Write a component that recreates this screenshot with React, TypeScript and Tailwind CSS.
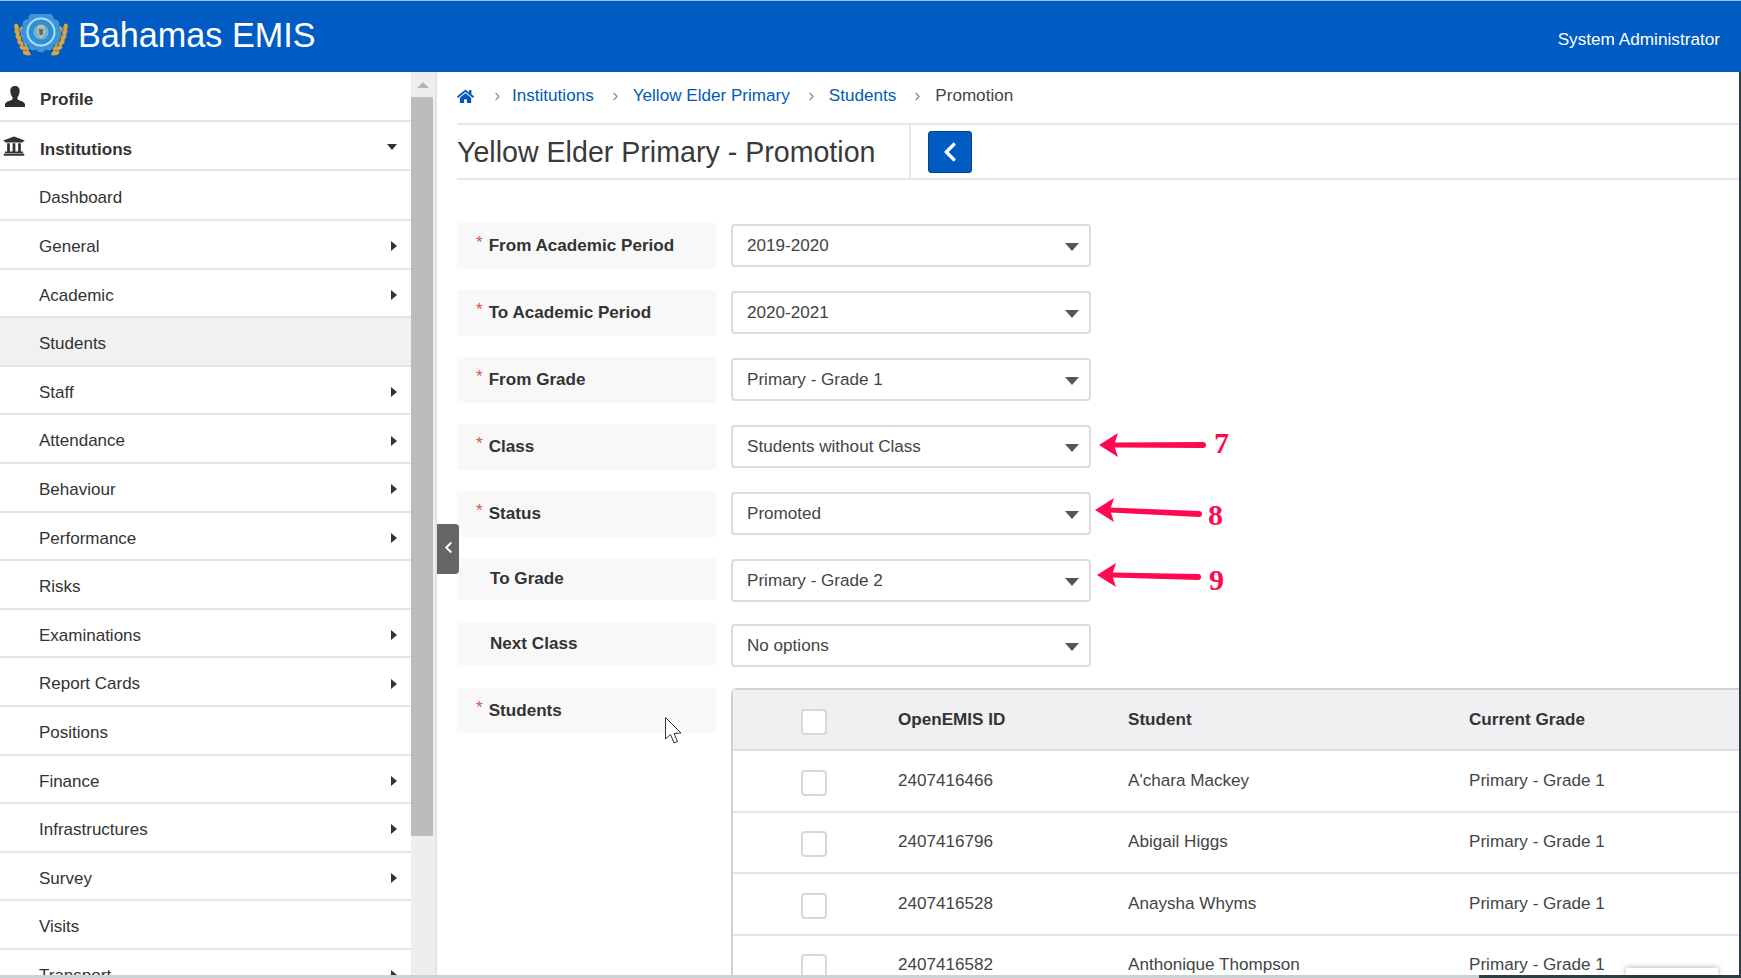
import React from 'react';
import { FaHome, FaUniversity, FaChevronLeft } from 'react-icons/fa';
import { ChevronRight } from 'lucide-react';

const navItems: [string, boolean][] = [
  ['Dashboard', false], ['General', true], ['Academic', true], ['Students', false], ['Staff', true],
  ['Attendance', true], ['Behaviour', true], ['Performance', true], ['Risks', false], ['Examinations', true],
  ['Report Cards', true], ['Positions', false], ['Finance', true], ['Infrastructures', true], ['Survey', true],
  ['Visits', false], ['Transport', true],
];

const formRows = [
  { label: 'From Academic Period', value: '2019-2020', req: true, top: 'mt-0', lh: 'h-[46px]' },
  { label: 'To Academic Period', value: '2020-2021', req: true, top: 'mt-[21px]', lh: 'h-[46px]' },
  { label: 'From Grade', value: 'Primary - Grade 1', req: true, top: 'mt-[21px]', lh: 'h-[46px]' },
  { label: 'Class', value: 'Students without Class', req: true, top: 'mt-[21px]', lh: 'h-[46px]' },
  { label: 'Status', value: 'Promoted', req: true, top: 'mt-[21px]', lh: 'h-[46px]' },
  { label: 'To Grade', value: 'Primary - Grade 2', req: false, top: 'mt-[21px]', lh: 'h-[42px]' },
  { label: 'Next Class', value: 'No options', req: false, top: 'mt-[21px]', lh: 'h-[42px]' },
];

const students = [
  ['2407416466', "A'chara Mackey"],
  ['2407416796', 'Abigail Higgs'],
  ['2407416528', 'Anaysha Whyms'],
  ['2407416582', 'Anthonique Thompson'],
];

function Logo() {
  const petals = Array.from({ length: 12 }, (_, i) => (i * Math.PI) / 6);
  const leaves = [0, 1, 2, 3, 4, 5];
  return (
    <svg width="56" height="44" viewBox="0 0 56 44" className="shrink-0 -mt-[2px]">
      {leaves.map((i) => (
        <g key={i} fill="#d8a441">
          <ellipse cx={3.5 + i * 0.3 + i * i * 0.33} cy={13 + i * 5.2} rx="2.2" ry="3.6" transform={`rotate(${-12 - i * 12} ${3.5 + i * 0.3 + i * i * 0.33} ${13 + i * 5.2})`} />
          <ellipse cx={52.5 - i * 0.3 - i * i * 0.33} cy={13 + i * 5.2} rx="2.2" ry="3.6" transform={`rotate(${12 + i * 12} ${52.5 - i * 0.3 - i * i * 0.33} ${13 + i * 5.2})`} />
          <ellipse cx={8 + i * 1.5} cy={15 + i * 4.8} rx="1.5" ry="3" transform={`rotate(${28 - i * 14} ${8 + i * 1.5} ${15 + i * 4.8})`} />
          <ellipse cx={48 - i * 1.5} cy={15 + i * 4.8} rx="1.5" ry="3" transform={`rotate(${-28 + i * 14} ${48 - i * 1.5} ${15 + i * 4.8})`} />
        </g>
      ))}
      {petals.map((a, i) => (
        <circle key={i} cx={28 + 15.5 * Math.cos(a)} cy={18 + 15.5 * Math.sin(a)} r="5" fill="#3f93d8" />
      ))}
      <circle cx="28" cy="18" r="17" fill="#3f93d8" />
      <circle cx="28" cy="18" r="14.5" fill="#a9e2f7" />
      <circle cx="28" cy="18" r="12.5" fill="#2f8fd0" />
      <circle cx="28" cy="18" r="7.5" fill="#6fb5d8" />
      <path d="M25 11 L31 11 L32 19 L28 25 L24 19 Z" fill="#c9b98a" />
      <path d="M26 15 L30 15 L29.5 21 L26.5 21 Z" fill="#3d6f98" />
    </svg>
  );
}

function Arrow({ className, x1, y1, tail, tailY, digit, dx }: { className: string; x1: number; y1: number; tail: number; tailY: number; digit: string; dx: string }) {
  return (
    <div className={`absolute flex items-center ${className}`}>
      <svg width={tail + 4} height="26" viewBox={`0 0 ${tail + 4} 26`} className="shrink-0">
        <path d={`M${x1 + 15} ${y1 - 2.5} L${tail} ${tailY - 3} A3 3 0 0 1 ${tail} ${tailY + 3} L${x1 + 15} ${y1 + 2.5} Z`} fill="#ff0a50" />
        <path d={`M${x1} ${y1} L${x1 + 19} ${y1 - 12} L${x1 + 15} ${y1} L${x1 + 19} ${y1 + 12} Z`} fill="#ff0a50" />
      </svg>
      <span className={`shrink-0 font-['Liberation_Serif',serif] font-bold text-[30px] leading-none text-[#ff0a50] ${dx}`}>{digit}</span>
    </div>
  );
}

function Checkbox() {
  return <div className="w-[26px] h-[26px] rounded-[4px] border-2 border-[#d8d8d8] bg-white" />;
}

function Caret() {
  return <div className="w-0 h-0 border-l-[7px] border-r-[7px] border-t-[8px] border-l-transparent border-r-transparent border-t-[#555]" />;
}

function Sep() {
  return <ChevronRight size={13} className="text-[#888] ml-[2px] -mr-[2px]" />;
}

export default function App() {
  return (
    <div className="relative h-[978px] overflow-hidden bg-white font-['Liberation_Sans',Arial,sans-serif] text-[#333] flex flex-col">
      <div className="h-px bg-[#9fbfe3]" />
      <header className="h-[71px] shrink-0 bg-[#005bc3] flex items-center justify-between pl-[13px] pr-[21px]">
        <div className="flex items-center gap-[9px]">
          <Logo />
          <span className="text-[34.2px] leading-none text-white -mt-[2px]">Bahamas EMIS</span>
        </div>
        <span className="text-[17.2px] text-white mt-[6px]">System Administrator</span>
      </header>

      <div className="flex flex-1 min-h-0">
        <aside className="w-[437px] shrink-0 flex">
          <nav className="w-[411px] shrink-0 overflow-hidden">
            <div className="h-[50px] flex items-center border-b-2 border-[#e4e4e6] relative">
              <svg width="20" height="21" viewBox="0 0 20 21" className="ml-[5px]" fill="#2e2e2e">
                <path d="M10 0 C13.5 0 15 2.5 14.6 6 C14.3 8.6 13.3 10.5 12.4 11.5 L12.6 13.6 C15 15 19.5 15.5 20 18.5 L20 21 L0 21 L0 18.5 C0.5 15.5 5 15 7.4 13.6 L7.6 11.5 C6.7 10.5 5.7 8.6 5.4 6 C5 2.5 6.5 0 10 0 Z" />
              </svg>
              <span className="ml-[15px] font-bold text-[17.1px] mt-[8px]">Profile</span>
            </div>
            <div className="h-[49px] flex items-center border-b-2 border-[#e4e4e6]">
              <FaUniversity size={22} className="ml-[3px] text-[#333]" />
              <span className="ml-[15px] font-bold text-[17.1px] mt-[8px]">Institutions</span>
              <div className="ml-auto mr-[14px] mt-[3px] w-0 h-0 border-l-[5px] border-r-[5px] border-t-[6px] border-l-transparent border-r-transparent border-t-[#333]" />
            </div>
            {navItems.map(([name, arrow], i) => (
              <div
                key={name}
                className={`${i === 0 ? 'h-[50px]' : 'h-[48.6px]'} flex items-center border-b-2 border-[#e4e4e6] pl-[39px] pr-[14px] ${name === 'Students' ? 'bg-[#f1f1f2]' : ''}`}
              >
                <span className="text-[17px] mt-[5px]">{name}</span>
                {arrow && <div className="ml-auto mt-[4px] w-0 h-0 border-t-[5px] border-b-[5px] border-l-[6px] border-t-transparent border-b-transparent border-l-[#333]" />}
              </div>
            ))}
          </nav>
          <div className="w-[26px] shrink-0 bg-[#eeeef0] border-r-2 border-[#e2e2e4]">
            <div className="h-[25px] flex items-center justify-center">
              <div className="w-0 h-0 border-l-[6px] border-r-[6px] border-b-[6px] border-l-transparent border-r-transparent border-b-[#b5b5b5]" />
            </div>
            <div className="h-[739px] w-[22px] bg-[#bcbcbc]" />
          </div>
        </aside>

        <main className="relative flex-1 min-w-0 pl-[20px]">
          <button className="absolute left-0 top-[452px] w-[22px] h-[50px] bg-[#666] rounded-r-[4px] flex items-center justify-center text-white pb-[4px]">
            <FaChevronLeft size={13} />
          </button>

          <div className="h-[53px] flex items-center gap-[13px] border-b-2 border-[#e8e8ea] text-[17.1px] text-[#005bb5] pb-[3px]">
            <FaHome size={17} className="mr-[4px]" />
            <ChevronRight size={13} className="text-[#888]" />
            <span className="-ml-[5px]">Institutions</span>
            <Sep />
            <span>Yellow Elder Primary</span>
            <Sep />
            <span>Students</span>
            <Sep />
            <span className="text-[#444]">Promotion</span>
          </div>

          <div className="h-[55px] flex items-center border-b-2 border-[#e8e8ea]">
            <h1 className="w-[454px] h-full flex items-center border-r-2 border-[#e8e8ea] text-[28.6px] text-[#3a3a3a] font-normal pt-[2px]">Yellow Elder Primary - Promotion</h1>
            <button className="ml-[17px] w-[44px] h-[42px] rounded-[3px] bg-[#005bc3] border border-[#0b3f7e] flex items-center justify-center text-white">
              <FaChevronLeft size={22} />
            </button>
          </div>

          <div className="mt-[43px]">
            {formRows.map((r) => (
              <div key={r.label} className={`flex gap-[15px] items-start ${r.top}`}>
                <div className={`w-[259px] ${r.lh} bg-[#f8f8f9] flex items-center ${r.req ? 'pl-[19px]' : 'pl-[33px]'} font-bold text-[17.1px]`}>
                  {r.req && <span className="text-[#d9534f] font-normal mr-[6px] -mt-[6px]">*</span>}
                  <span>{r.label}</span>
                </div>
                <div className="w-[360px] h-[43px] mt-px bg-white border-2 border-[#dcdcdc] rounded-[4px] flex items-center pl-[14px] pr-[10px] text-[17.1px] text-[#444]">
                  <span>{r.value}</span>
                  <div className="ml-auto mt-[3px]"><Caret /></div>
                </div>
              </div>
            ))}

            <div className="flex gap-[15px] items-start mt-[21px]">
              <div className="w-[259px] h-[45px] bg-[#f8f8f9] flex items-center pl-[19px] font-bold text-[17.1px]">
                <span className="text-[#d9534f] font-normal mr-[6px] -mt-[6px]">*</span>
                <span>Students</span>
              </div>
              <div className="flex-1 min-w-0 mr-[2px] border-l-2 border-t-2 border-[#d0d0d0] rounded-tl-[6px] text-[17.1px]">
                <div className="h-[61px] bg-[#f0f0f2] grid grid-cols-[165px_230px_341px_1fr] items-center border-b-2 border-[#dedee0] font-bold">
                  <div className="pl-[68px] pt-[4px]"><Checkbox /></div>
                  <span>OpenEMIS ID</span>
                  <span>Student</span>
                  <span>Current Grade</span>
                </div>
                {students.map(([id, name]) => (
                  <div key={id} className="h-[61.5px] grid grid-cols-[165px_230px_341px_1fr] items-center border-b-2 border-[#e4e4e6] text-[#444]">
                    <div className="pl-[68px] pt-[4px]"><Checkbox /></div>
                    <span>{id}</span>
                    <span>{name}</span>
                    <span>Primary - Grade 1</span>
                  </div>
                ))}
              </div>
            </div>
          </div>
        </main>
      </div>

      <Arrow className="left-[1095px] top-[432px]" x1={4} y1={13} tail={108} tailY={13} digit="7" dx="ml-[7px] -mt-[4px]" />
      <Arrow className="left-[1091px] top-[489px]" x1={4} y1={13} tail={108} tailY={17} digit="8" dx="ml-[5px] mt-[11px]" />
      <Arrow className="left-[1093px] top-[555px]" x1={4} y1={13} tail={105} tailY={15} digit="9" dx="ml-[7px] mt-[10px]" />

      <svg width="19" height="29" viewBox="0 0 19 29" className="absolute left-[664px] top-[716px]">
        <path d="M1.5 1.5 L1.5 23 L6.5 18.5 L10 27 L13.5 25.5 L10 17.5 L17 17 Z" fill="#fff" stroke="#333" strokeWidth="1" />
      </svg>

      <div className="absolute left-0 right-0 bottom-0 h-[3px] bg-[#c8d4d4] flex justify-end">
        <div className="w-[262px] h-full bg-[#2b4040]" />
      </div>
      <div className="absolute right-0 top-[72px] bottom-0 w-[2px] bg-[#2b4040]" />
      <div className="absolute left-[1626px] bottom-[3px] w-[92px] h-[7px] bg-white shadow-[0_0_6px_rgba(0,0,0,0.35)]" />
    </div>
  );
}
